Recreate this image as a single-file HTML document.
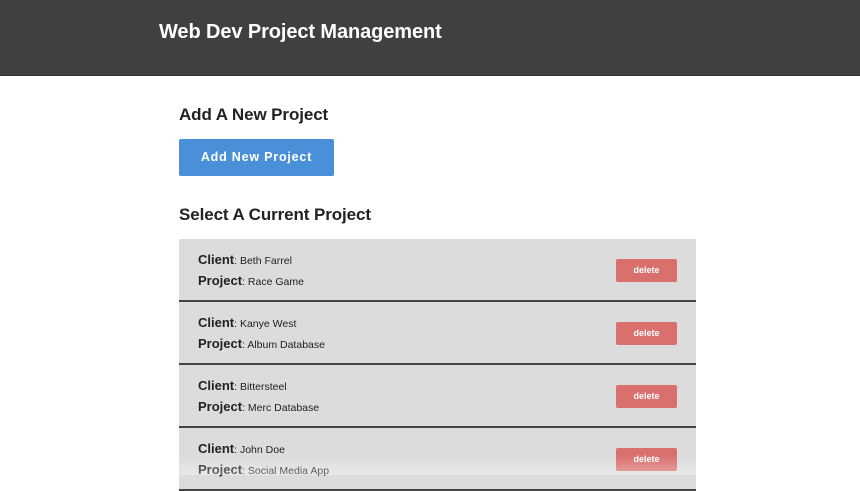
<!DOCTYPE html>
<html><head><style>
*{margin:0;padding:0;box-sizing:border-box}
body{width:860px;height:475px;overflow:hidden;background:#fff;font-family:"Liberation Sans",sans-serif;color:#222;position:relative}
.hdr{height:76px;background:#404040;border-bottom:1px solid #333}
.hdr h1{position:absolute;left:159px;top:21px;font-size:20px;color:#fff;font-weight:bold;letter-spacing:-0.1px}
h2{position:absolute;left:179px;font-size:17px;font-weight:bold;color:#222;letter-spacing:-0.1px}
.add{position:absolute;left:179px;top:139px;width:155px;height:37px;background:#4a90d9;border-radius:2px;color:#fff;font-size:12.5px;font-weight:bold;letter-spacing:0.8px;text-align:center;line-height:37px}
.list{position:absolute;left:179px;top:239px;width:517px}
.row{height:63px;background:#dcdcdc;border-bottom:2px solid #444;position:relative}
.row .c{position:absolute;left:19px;top:11px;font-size:10.5px;line-height:20px}
.row b{font-size:13px}
.del{position:absolute;left:437px;top:20px;width:61px;height:23px;background:#d9706e;border-radius:2px;color:#fff;font-size:9px;text-align:center;line-height:23px;font-weight:bold}
.shade{position:absolute;left:0;right:0;top:455px;height:20px;background:linear-gradient(rgba(255,255,255,0),rgba(255,255,255,0.35))}
</style></head><body>
<div class="hdr"><h1>Web Dev Project Management</h1></div>
<h2 style="top:105px">Add A New Project</h2>
<div class="add">Add New Project</div>
<h2 style="top:205px">Select A Current Project</h2>
<div class="list">
<div class="row"><div class="c"><b>Client</b>: Beth Farrel<br><b>Project</b>: Race Game</div><div class="del">delete</div></div>
<div class="row"><div class="c"><b>Client</b>: Kanye West<br><b>Project</b>: Album Database</div><div class="del">delete</div></div>
<div class="row"><div class="c"><b>Client</b>: Bittersteel<br><b>Project</b>: Merc Database</div><div class="del">delete</div></div>
<div class="row"><div class="c"><b>Client</b>: John Doe<br><b>Project</b>: Social Media App</div><div class="del">delete</div></div>
</div>
<div class="shade"></div>
</body></html>
